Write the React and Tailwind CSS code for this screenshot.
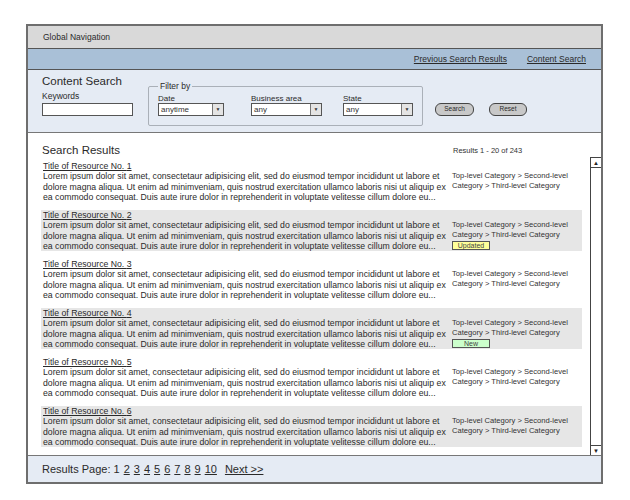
const lorem = [
  'Lorem ipsum dolor sit amet, consectetaur adipisicing elit, sed do eiusmod tempor incididunt ut labore et',
  'dolore magna aliqua. Ut enim ad minimveniam, quis nostrud exercitation ullamco laboris nisi ut aliquip ex',
  'ea commodo consequat. Duis aute irure dolor in reprehenderit in voluptate velitesse cillum dolore eu...',
];

const results = [
  { n: 1 },
  { n: 2, shaded: true, badge: 'Updated' },
  { n: 3 },
  { n: 4, shaded: true, badge: 'New' },
  { n: 5 },
  { n: 6, shaded: true },
];

function Select({ value, width }) {
  return (
    <div className={`flex h-[13px] border border-[#555] bg-white ${width}`}>
      <span className="flex-1 pl-[2px] text-[8px] leading-[11px] text-[#333]">{value}</span>
      <span className="flex w-[11px] items-center justify-center border-l border-[#777] bg-[#e4e4e4] text-[5px] text-[#333]">▼</span>
    </div>
  );
}

function Badge({ label }) {
  const color = label === 'New' ? 'bg-[#ccffcc]' : 'bg-[#ffff99]';
  return (
    <div className={`mt-[1px] flex h-[9px] w-[38px] items-center justify-center border border-[#555] text-[7px] leading-none text-[#444] ${color}`}>
      {label}
    </div>
  );
}

function ResultItem({ n, shaded, badge }) {
  return (
    <div className={`mb-[8px] flex h-[41px] pl-[2px] ${shaded ? 'bg-[#e6e6e6]' : ''}`}>
      <div className="w-[409px] text-[8.7px] leading-[10.3px] text-[#2a2a2a]">
        <div className="underline">Title of Resource No. {n}</div>
        {lorem.map((line) => (
          <div key={line} className="whitespace-nowrap">{line}</div>
        ))}
      </div>
      <div className="pt-[10px] text-[7.6px] leading-[10px] text-[#333]">
        <div className="whitespace-nowrap">Top-level Category &gt; Second-level</div>
        <div className="whitespace-nowrap">Category &gt; Third-level Category</div>
        {badge && <Badge label={badge} />}
      </div>
    </div>
  );
}

export default function App() {
  return (
    <div className="min-h-screen bg-white pl-[26px] pt-[24px] font-['Liberation_Sans',Arial,sans-serif]">
      <div className="flex h-[460px] w-[577px] flex-col border-2 border-[#6e6e6e]">
        {/* global nav */}
        <div className="flex h-[23px] items-center border-b border-[#555] bg-[#d9d9d9] pl-[15px] text-[8.5px] text-[#2a2a2a]">
          Global Navigation
        </div>

        {/* breadcrumb bar */}
        <div className="flex h-[21px] items-center justify-end gap-[20px] border-b border-[#555] bg-[#a9c0d7] pr-[15px] text-[8.5px] text-[#2a2a2a]">
          <span className="underline">Previous Search Results</span>
          <span className="underline">Content Search</span>
        </div>

        {/* search form */}
        <div className="flex h-[63px] items-start border-b border-[#777] bg-[#e5ebf4] pl-[14px]">
          <div className="pt-[4px]">
            <div className="text-[11.5px] leading-[14px] text-[#2a2a2a]">Content Search</div>
            <div className="mt-[3px] text-[8.5px] leading-[10px] text-[#2a2a2a]">Keywords</div>
            <div className="mt-[2px] h-[13px] w-[91px] border border-[#555] bg-white" />
          </div>

          <fieldset className="ml-[15px] mt-[11px] h-[45px] w-[275px] rounded-[2px] border border-[#aab0b8] pl-[9px] pr-[9px]">
            <legend className="px-[2px] text-[8.5px] leading-[10px] text-[#2a2a2a]">Filter by</legend>
            <div className="flex pt-[3px]">
              <div>
                <div className="text-[8px] leading-[9px] text-[#2a2a2a]">Date</div>
                <Select value="anytime" width="w-[66px]" />
              </div>
              <div className="ml-[27px]">
                <div className="text-[8px] leading-[9px] text-[#2a2a2a]">Business area</div>
                <Select value="any" width="w-[71px]" />
              </div>
              <div className="ml-[21px]">
                <div className="text-[8px] leading-[9px] text-[#2a2a2a]">State</div>
                <Select value="any" width="w-[70px]" />
              </div>
            </div>
          </fieldset>

          <div className="ml-[12px] mt-[33px] flex gap-[15px]">
            <button className="flex h-[13px] w-[39px] items-center justify-center rounded-[6px] border border-[#444] bg-[#c8c8c8] text-[6.5px] leading-none text-[#2a2a2a]">
              Search
            </button>
            <button className="flex h-[13px] w-[38px] items-center justify-center rounded-[6px] border border-[#444] bg-[#c8c8c8] text-[6.5px] leading-none text-[#2a2a2a]">
              Reset
            </button>
          </div>
        </div>

        {/* results */}
        <div className="flex flex-1 flex-col">
          <div className="flex h-[24px] items-end pl-[14px]">
            <span className="w-[411px] text-[11.5px] leading-[14px] text-[#2a2a2a]">Search Results</span>
            <span className="pb-[1px] text-[7.5px] leading-[10px] text-[#333]">Results 1 - 20 of 243</span>
          </div>
          <div className="flex flex-1">
            <div className="flex-1 pl-[13px] pr-[8px] pt-[4px]">
              {results.map((r) => (
                <ResultItem key={r.n} {...r} />
              ))}
            </div>
            <div className="flex w-[11px] flex-col justify-between border-l border-t border-[#444] bg-white">
              <div className="flex h-[10px] items-center justify-center border-b border-[#444] text-[6px] leading-none text-[#222]">▲</div>
              <div className="flex h-[10px] items-center justify-center border-t border-[#444] text-[6px] leading-none text-[#222]">▼</div>
            </div>
          </div>
        </div>

        {/* pagination */}
        <div className="flex h-[27px] items-center gap-[4px] border-t border-[#777] bg-[#e5ebf4] pl-[14px] text-[11px] text-[#2a2a2a]">
          <span>Results Page: 1</span>
          {[2, 3, 4, 5, 6, 7, 8, 9, 10].map((p) => (
            <span key={p} className="underline">{p}</span>
          ))}
          <span className="ml-[4px] underline">Next &gt;&gt;</span>
        </div>
      </div>
    </div>
  );
}
